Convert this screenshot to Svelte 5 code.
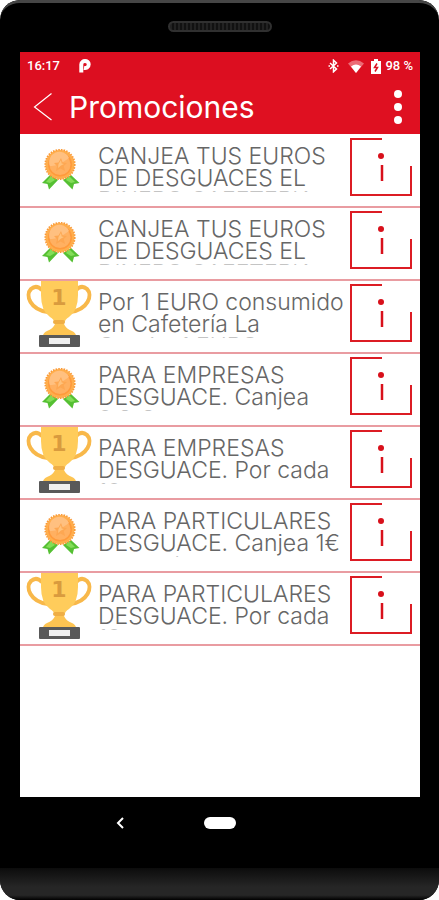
<script lang="ts">
  type Promo = { kind: "medal" | "trophy"; lines: string[] };

  const promos: Promo[] = [
    { kind: "medal", lines: ["CANJEA TUS EUROS", "DE DESGUACES EL", "DINERO CAFETERIA"] },
    { kind: "medal", lines: ["CANJEA TUS EUROS", "DE DESGUACES EL", "DINERO CAFETERIA"] },
    { kind: "trophy", lines: ["Por 1 EURO consumido", "en Cafetería La", "Granja, 1 EURO"] },
    { kind: "medal", lines: ["PARA EMPRESAS", "DESGUACE. Canjea", "0,2 € puntos"] },
    { kind: "trophy", lines: ["PARA EMPRESAS", "DESGUACE. Por cada", "10 euros con"] },
    { kind: "medal", lines: ["PARA PARTICULARES", "DESGUACE. Canjea 1€", "por cada punto"] },
    { kind: "trophy", lines: ["PARA PARTICULARES", "DESGUACE. Por cada", "10 euros con"] },
  ];
</script>

{#snippet medal()}
  <svg class="medal" viewBox="0 0 39 42" width="39" height="42" aria-hidden="true">
    <path d="M9 26 L1 34 L6.500 35 L8 40.500 L17 31Z" fill="#55c033" />
    <path d="M30 26 L38.500 34 L33 35 L31.500 40.500 L22 31Z" fill="#55c033" />
    <path d="M10 27 L5 33 L9 34 L14 31Z" fill="#83dd58" />
    <path d="M28 27 L34 33 L30 34 L25 31Z" fill="#83dd58" />
    <circle cx="19" cy="15.500" r="14.500" fill="#ffae4c" />
    <circle cx="19" cy="15.500" r="14.800" fill="none" stroke="#fa9a37" stroke-width="1.600" stroke-dasharray="1.600 1.100" />
    <circle cx="19" cy="15.500" r="12" fill="#ff9a3c" />
    <circle cx="19" cy="15.500" r="10.500" fill="#ffb061" />
    <path d="M9 17 Q16 18 28 9 A10.300 10.300 0 0 0 9 17Z" fill="#ffc080" />
    <path d="M20 9 L21.700 13.500 L26 14 L22.800 17 L24 22 L19.500 19.500 L15 22 L16 17 L13 14 L17.500 13.500Z" fill="#fda752" />
    <path d="M20 11 L20.700 14.500 L23 15 L20 16.500 L17 19 L17.500 15Z" fill="#ffc27c" />
  </svg>
{/snippet}

{#snippet trophy()}
  <svg class="trophy" viewBox="0 0 66 67" width="66" height="67" role="img" aria-label="Trofeo">
    <path d="M16 9 C13 6 9 4.500 5 8 C-1 14 4 29 22 31" fill="none" stroke="#f8b84a" stroke-width="4" />
    <path d="M50 9 C53 6 57 4.500 61 8 C67 14 62 29 44 31" fill="none" stroke="#f8b84a" stroke-width="4" />
    <path d="M15 0 H52 V14 Q52 30 43 36 Q39 38 38 43 H29 Q28 38 24 36 Q15 30 15 14Z" fill="#ffcc5b" />
    <path d="M29 43 H38 Q40 48 46 50 Q50 52 50 55 H17 Q17 52 21 50 Q27 48 29 43Z" fill="#fdc452" />
    <rect x="27" y="39" width="12" height="4" rx="2" fill="#efae45" />
    <text x="33" y="24" text-anchor="middle" class="place">1</text>
    <rect x="13" y="54" width="41" height="12" rx="1" fill="#595959" />
    <rect x="23" y="57" width="21" height="6" fill="#efefef" />
  </svg>
{/snippet}

<div class="phone">
  <div class="top-bezel"><span class="speaker"></span></div>

  <main class="screen">
    <div class="status">
      <span>16:17</span>
      <svg class="app-mark" viewBox="0 0 12 14" width="12" height="14" aria-hidden="true">
        <path d="M2.300 13.500 V5.500 C2.300 1 9.700 1 9.700 5.300 C9.700 8.800 7 9.300 5 9" fill="none" stroke="#fff" stroke-width="4" />
      </svg>
      <div class="status-right">
        <svg viewBox="0 0 12 14" width="12" height="14" aria-hidden="true">
          <path d="M2 4 L8.500 10 L5.500 12.800 V1.200 L8.500 4 L2 10" fill="none" stroke="#fff" stroke-width="1.500" />
          <path d="M0.500 7 H2 M9 7 H10.500" stroke="#fff" stroke-width="1.500" />
        </svg>
        <svg class="wifi" viewBox="0 0 16 13" width="16" height="13" aria-hidden="true">
          <path d="M0 3.500 Q8 -3 16 3.500 L8 13Z" fill="#ec6b76" />
          <path d="M3 6.500 Q8 2.500 13 6.500 L8 13Z" fill="#fff" />
        </svg>
        <svg class="battery" viewBox="0 0 10 15" width="10" height="15" aria-hidden="true">
          <path d="M3 0 H7 V2 H10 V15 H0 V2 H3Z" fill="#fff" />
          <path d="M6 4.500 L3.500 8.500 H6.500 L4 12.500" fill="none" stroke="#dc1021" stroke-width="1.500" />
        </svg>
        <span>98 %</span>
      </div>
    </div>

    <header class="bar">
      <button class="back" aria-label="Volver">
        <svg viewBox="0 0 20 28" width="20" height="28">
          <path d="M18.500 0.500 L1.500 14 L18.500 27" fill="none" stroke="#fff" stroke-width="1.200" />
        </svg>
      </button>
      <h1>Promociones</h1>
      <button class="more" aria-label="Más opciones">
        <svg viewBox="0 0 8 34" width="8" height="34" fill="#fff">
          <circle cx="4" cy="4" r="4" />
          <circle cx="4" cy="17" r="4" />
          <circle cx="4" cy="30" r="4" />
        </svg>
      </button>
    </header>

    <ul class="promos">
      {#each promos as promo}
        <li>
          <div class="badge">
            {#if promo.kind === "medal"}
              {@render medal()}
            {:else}
              {@render trophy()}
            {/if}
          </div>
          <p class="text">
            {#each promo.lines as line}
              <span>{line}</span>
            {/each}
          </p>
          <button class="info" aria-label="Información">
            <svg viewBox="0 0 62 60" width="62" height="60">
              <path d="M32 2 H1 V58 H61 V29" fill="none" stroke="#dc1c24" stroke-width="2" />
              <circle cx="31" cy="19" r="3" fill="#d8101b" />
              <path d="M32 28 V44" stroke="#d8101b" stroke-width="2.500" />
            </svg>
          </button>
        </li>
      {/each}
    </ul>
  </main>

  <nav class="nav">
    <button class="nav-back" aria-label="Atrás">
      <svg viewBox="0 0 8 12" width="8" height="12">
        <path d="M7 1 L2 6 L7 11" fill="none" stroke="#fff" stroke-width="2" />
      </svg>
    </button>
    <button class="nav-home" aria-label="Inicio"></button>
  </nav>
  <div class="chin"></div>
</div>

<style>
  :global(body) {
    margin: 0;
    background: #fff;
  }

  .phone {
    box-sizing: border-box;
    display: flex;
    flex-direction: column;
    min-height: 100vh;
    background: #000;
    border-radius: 20px;
    overflow: hidden;
    font-family: Inter, Roboto, sans-serif;
  }

  button {
    display: flex;
    padding: 0;
    border: 0;
    background: none;
    cursor: pointer;
  }

  svg {
    display: block;
  }

  .top-bezel {
    box-sizing: border-box;
    display: flex;
    justify-content: center;
    align-items: flex-start;
    height: 52px;
    padding-top: 18px;
    border-top: 3px solid #464646;
    border-radius: 20px 20px 0 0;
  }

  .speaker {
    box-sizing: border-box;
    width: 104px;
    height: 11px;
    border: 2px solid #303030;
    border-radius: 6px;
    background: repeating-linear-gradient(90deg, #222 0 2px, #111 2px 4px);
  }

  .screen {
    flex: 1;
    margin: 0 19px 0 20px;
    background: #fff;
  }

  .status {
    box-sizing: border-box;
    display: flex;
    align-items: center;
    height: 28px;
    padding: 0 7px;
    background: #dc0e20;
    color: #fff;
    font: 500 13px/28px Roboto, sans-serif;
  }

  .app-mark {
    margin-left: 19px;
  }

  .status-right {
    display: flex;
    align-items: center;
    margin-left: auto;
  }

  .wifi {
    margin-left: 8px;
  }

  .battery {
    margin: 0 4px 0 7px;
  }

  .bar {
    box-sizing: border-box;
    display: flex;
    align-items: center;
    height: 54px;
    padding: 0 18px 0 13px;
    background: #df1021;
    color: #fff;
  }

  .bar h1 {
    flex: 1;
    margin: 0 0 0 16px;
    font-size: 30px;
    font-weight: 400;
    line-height: 54px;
  }

  .promos {
    margin: 0;
    padding: 1px 0 0;
    list-style: none;
  }

  .promos li {
    display: flex;
    align-items: flex-start;
    height: 71px;
    padding-right: 8px;
    border-bottom: 2px solid #e99ca1;
  }

  .badge {
    flex: none;
    display: flex;
    justify-content: center;
    width: 66px;
    margin: 0 6px;
  }

  .medal {
    margin: 14px 0 0 3px;
  }

  .place {
    font: 700 22px "DejaVu Sans", sans-serif;
    fill: #d99b3e;
  }

  .text {
    flex: 1;
    min-width: 0;
    height: 47px;
    margin: 10px 0 0;
    overflow: hidden;
    color: #666;
    font-size: 23px;
    font-weight: 300;
    line-height: 22px;
    white-space: nowrap;
  }

  .text span {
    display: block;
  }

  /* only the tops of the third line show */
  .text span:last-child {
    color: #c4c4c4;
  }

  .info {
    flex: none;
    margin-top: 2px;
  }

  .nav {
    display: grid;
    grid-template-columns: 1fr 32px 1fr;
    align-items: center;
    height: 52px;
    padding-bottom: 19px;
  }

  .nav-back {
    justify-self: center;
    padding-left: 36px;
  }

  .nav-home {
    width: 32px;
    height: 12px;
    border-radius: 6px;
    background: #fff;
  }

  .chin {
    height: 32px;
    background: linear-gradient(#0c0c0c, #262626 60%, #262626 85%, #000);
  }
</style>
